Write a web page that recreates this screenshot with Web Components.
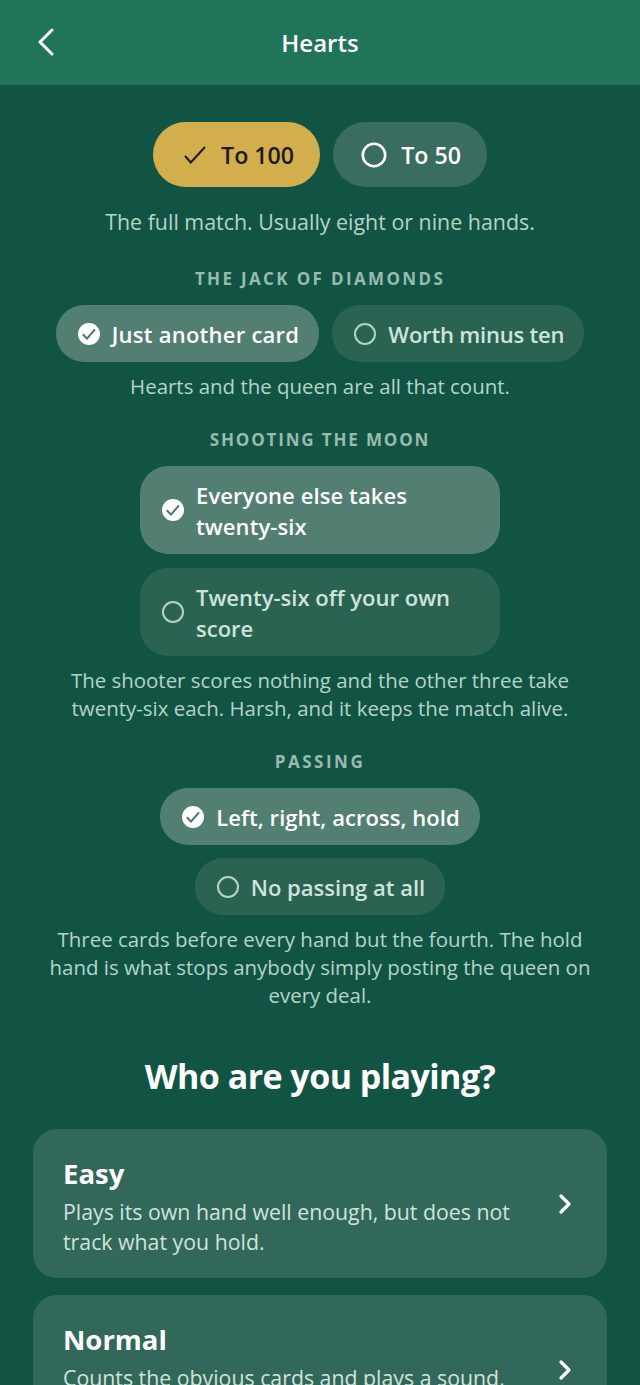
<!DOCTYPE html>
<html>
<head>
<meta charset="utf-8">
<style>
  html, body { margin: 0; height: 100%; }
  body {
    height: 1385px;
    overflow: hidden;
    background: #125443;
    font-family: "Open Sans", sans-serif;
    color: #fff;
  }
  main {
    display: flex;
    flex-direction: column;
    align-items: center;
    padding: 37px 33px 0;
  }
  .row { display: flex; justify-content: center; }
  .row.top { gap: 13px; margin-bottom: 21px; }
  .row.chips { gap: 13px; margin-bottom: 10px; }
  .col { display: flex; flex-direction: column; align-items: center; gap: 14px; margin-bottom: 10px; }
  .col.tight { gap: 13px; }
  h2 {
    margin: 44px 0 30px;
    font: 700 34px/46px "Open Sans", sans-serif;
    letter-spacing: -0.55px;
  }
  .cards { align-self: stretch; display: flex; flex-direction: column; gap: 17px; }
  .lead { --hint-size: 21.4px; margin-bottom: 3px; }
</style>
</head>
<body>
<app-bar>Hearts</app-bar>
<main>
  <div class="row top">
    <seg-button selected>To 100</seg-button>
    <seg-button>To 50</seg-button>
  </div>
  <hint-text class="lead">The full match. Usually eight or nine hands.</hint-text>

  <rule-label style="--track: 2.35px">THE JACK OF DIAMONDS</rule-label>
  <div class="row chips">
    <choice-chip selected style="--track: 0.25px">Just another card</choice-chip>
    <choice-chip style="--track: -0.2px">Worth minus ten</choice-chip>
  </div>
  <hint-text>Hearts and the queen are all that count.</hint-text>

  <rule-label style="--track: 1.85px">SHOOTING THE MOON</rule-label>
  <div class="col">
    <choice-chip selected wide>Everyone else takes twenty-six</choice-chip>
    <choice-chip wide style="--track: 0">Twenty-six off your own score</choice-chip>
  </div>
  <hint-text>The shooter scores nothing and the other three take<br>twenty-six each. Harsh, and it keeps the match alive.</hint-text>

  <rule-label style="--track: 2.5px">PASSING</rule-label>
  <div class="col tight">
    <choice-chip selected style="--track: 0.05px">Left, right, across, hold</choice-chip>
    <choice-chip style="--track: 0">No passing at all</choice-chip>
  </div>
  <hint-text>Three cards before every hand but the fourth. The hold<br>hand is what stops anybody simply posting the queen on<br>every deal.</hint-text>

  <h2>Who are you playing?</h2>
  <div class="cards">
    <level-card name="Easy">Plays its own hand well enough, but does not track what you hold.</level-card>
    <level-card name="Normal">Counts the obvious cards and plays a sound,</level-card>
  </div>
</main>

<script>
const FONT = '"Open Sans", sans-serif';

class AppBar extends HTMLElement {
  constructor() {
    super();
    this.attachShadow({ mode: 'open' }).innerHTML = `
      <style>
        :host {
          display: flex;
          align-items: center;
          justify-content: center;
          position: relative;
          height: 85px;
          box-sizing: border-box;
          background: #207558;
          font: 600 24px/30px ${FONT};
          color: #fff;
        }
        button {
          position: absolute;
          left: 34px;
          top: 26px;
          padding: 0;
          border: 0;
          background: none;
          line-height: 0;
        }
      </style>
      <button aria-label="Back">
        <svg width="24" height="32" viewBox="0 0 24 32" fill="none" stroke="#fff" stroke-width="3" stroke-linecap="round" stroke-linejoin="round"><path d="M18 4 6 16l12 12"/></svg>
      </button>
      <slot></slot>
    `;
  }
}

class SegButton extends HTMLElement {
  constructor() {
    super();
    const on = this.hasAttribute('selected');
    const icon = on
      ? '<svg width="24" height="24" viewBox="0 0 24 24" fill="none" stroke="#1c1b13" stroke-width="2"><path d="M2 13 7.8 19.5 22 4"/></svg>'
      : '<svg width="26" height="26" viewBox="0 0 26 26" fill="none" stroke="#fff" stroke-width="2.6"><circle cx="13" cy="13" r="11.2"/></svg>';
    this.attachShadow({ mode: 'open' }).innerHTML = `
      <style>
        :host {
          display: inline-flex;
          align-items: center;
          gap: 14px;
          height: 65px;
          padding: 0 ${on ? '26px 0 30px' : '26px 0 28px'};
          box-sizing: border-box;
          border-radius: 32.5px;
          background: ${on ? '#d2af4c' : '#3a6d5f'};
          color: ${on ? '#1c1b13' : '#fff'};
          font: 600 23.2px/30px ${FONT};
        }
        svg { display: block; flex: none; }
      </style>
      ${icon}<slot></slot>
    `;
  }
}

class ChoiceChip extends HTMLElement {
  constructor() {
    super();
    const on = this.hasAttribute('selected');
    const icon = on
      ? '<svg width="24" height="24" viewBox="0 0 24 24"><circle cx="12" cy="12" r="11" fill="#fff"/><path d="M5.8 12.3 10 16.6 18 7.4" fill="none" stroke="#47756a" stroke-width="2"/></svg>'
      : '<svg width="24" height="24" viewBox="0 0 24 24" fill="none" stroke="#b4d4c8" stroke-width="2"><circle cx="12" cy="12" r="10"/></svg>';
    this.attachShadow({ mode: 'open' }).innerHTML = `
      <style>
        :host {
          display: inline-flex;
          align-items: center;
          gap: 11px;
          min-height: 57px;
          padding: 13px 20px 13px 21px;
          box-sizing: border-box;
          border-radius: 28px;
          background: ${on ? '#527f71' : '#2b6353'};
          color: ${on ? '#fff' : '#cfe3db'};
          font: 600 22px/31px ${FONT};
          letter-spacing: var(--track, 0.1px);
        }
        :host([wide]) { width: 360px; padding-right: 40px; }
        svg { display: block; flex: none; }
        span { position: relative; top: 1px; }
      </style>
      ${icon}<span><slot></slot></span>
    `;
  }
}

class RuleLabel extends HTMLElement {
  constructor() {
    super();
    this.attachShadow({ mode: 'open' }).innerHTML = `
      <style>
        :host {
          display: block;
          margin: 28px 0 14px;
          color: #98bbae;
          font: 700 17px/24px ${FONT};
          letter-spacing: var(--track, 2.1px);
          text-align: center;
        }
      </style>
      <slot></slot>
    `;
  }
}

class HintText extends HTMLElement {
  constructor() {
    super();
    this.attachShadow({ mode: 'open' }).innerHTML = `
      <style>
        :host {
          display: block;
          color: #b4d4c8;
          font: 400 var(--hint-size, 20.45px)/28px ${FONT};
          text-align: center;
        }
      </style>
      <slot></slot>
    `;
  }
}

class LevelCard extends HTMLElement {
  constructor() {
    super();
    this.attachShadow({ mode: 'open' }).innerHTML = `
      <style>
        :host {
          display: flex;
          align-items: center;
          gap: 20px;
          min-height: 149px;
          padding: 27px 30px 21px;
          box-sizing: border-box;
          border-radius: 24px;
          background: #32685a;
        }
        .text { flex: 1; align-self: flex-start; }
        h3 { margin: 0 0 5px; font: 700 27.5px/36px ${FONT}; color: #fff; }
        p { margin: 0; font: 400 21.3px/30px ${FONT}; color: #cfe3db; }
        svg { display: block; flex: none; margin-right: 4px; margin-top: -6px; }
      </style>
      <div class="text">
        <h3>${this.getAttribute('name')}</h3>
        <p><slot></slot></p>
      </div>
      <svg width="16" height="24" viewBox="0 0 16 24" fill="none" stroke="#fff" stroke-width="3.2" stroke-linecap="round" stroke-linejoin="round"><path d="M4 4l8 8-8 8"/></svg>
    `;
  }
}

customElements.define('app-bar', AppBar);
customElements.define('seg-button', SegButton);
customElements.define('choice-chip', ChoiceChip);
customElements.define('rule-label', RuleLabel);
customElements.define('hint-text', HintText);
customElements.define('level-card', LevelCard);
</script>
</body>
</html>
